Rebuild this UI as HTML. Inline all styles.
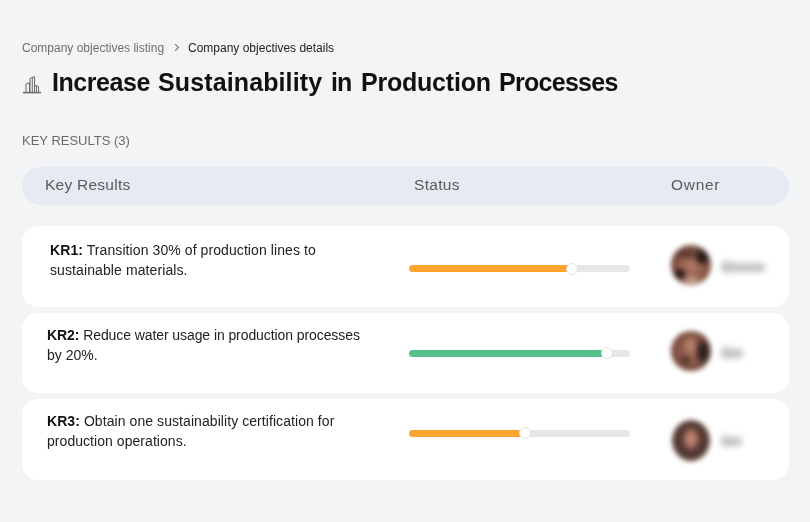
<!DOCTYPE html>
<html><head><meta charset="utf-8">
<style>
html,body{margin:0;padding:0;}
body{width:810px;height:522px;background:#f3f4f6;position:relative;overflow:hidden;font-family:"Liberation Sans",sans-serif;}
.a{position:absolute;white-space:nowrap;line-height:1;will-change:transform;}
.bc1{left:22px;top:41.5px;font-size:12px;color:#6e6e6e;}
.chev{left:172px;top:41px;width:8px;height:12px;}
.bc2{left:188px;top:41.5px;font-size:12px;color:#222;}
.title{top:69.5px;font-size:25px;font-weight:bold;color:#111;}
.icon{left:22px;top:75px;width:20px;height:20px;}
.kr{left:22px;top:134px;font-size:13px;color:#6a6a6a;}
.thead{left:22px;top:167px;width:767px;height:38px;border-radius:19px;background:#e6eaf2;}
.th{top:177px;font-size:15.5px;color:#5a5a5a;}
.card{will-change:auto;left:22px;width:767px;height:80px;border-radius:16px;background:#fff;}
.txt{font-size:14px;color:#222;line-height:20px;white-space:nowrap;}
.txt b{font-weight:bold;color:#111;}
.track{left:409px;width:221px;height:7px;border-radius:4px;background:#e7e7e7;}
.fill{position:absolute;left:0;top:0;height:100%;border-radius:4px 0 0 4px;}
.knob{width:10px;height:10px;border-radius:50%;background:#fff;border:1px solid #e2e2e2;}
.av{width:40px;height:40px;border-radius:50%;filter:blur(2.6px);}
.nm{height:9px;border-radius:4px;background:#c2c2c2;filter:blur(3px);}
</style></head><body>
<div class="a bc1">Company objectives listing</div>
<svg class="a chev" viewBox="0 0 8 12"><path d="M3.1 3.1 L6.4 6.4 L3.1 9.8" fill="none" stroke="#737373" stroke-width="1.1"/></svg>
<div class="a bc2">Company objectives details</div>

<svg class="a" style="left:20px;top:72px;width:24px;height:24px" viewBox="20 72 24 24" fill="none" stroke="#6a6a6a" stroke-width="1">
  <path d="M26 92 V84 L29.5 82.8 V92"/>
  <path d="M30 92 V78.5 L34.5 76.6 V92"/>
  <path d="M32.3 92 V77.6"/>
  <path d="M34.5 85.2 L38.5 86.6 V92"/>
  <path d="M36.4 92 V86"/>
  <path d="M23 92.6 H41" stroke-width="1.6" stroke="#707070"/>
</svg>
<div class="a title" style="left:51.6px;letter-spacing:-0.45px">Increase</div>
<div class="a title" style="left:158.1px;letter-spacing:0.12px">Sustainability</div>
<div class="a title" style="left:331px;letter-spacing:-1px">in</div>
<div class="a title" style="left:360.5px;letter-spacing:-0.22px">Production</div>
<div class="a title" style="left:499.2px;letter-spacing:-0.72px">Processes</div>

<div class="a kr">KEY RESULTS (3)</div>

<div class="a thead"></div>
<div class="a th" style="left:45px;letter-spacing:0.25px">Key Results</div>
<div class="a th" style="left:414px;letter-spacing:0.3px">Status</div>
<div class="a th" style="left:671px;letter-spacing:0.7px">Owner</div>

<div class="a card" style="top:226px;height:81px"></div>
<div class="a card" style="top:313px;height:80px"></div>
<div class="a card" style="top:399px;height:81px"></div>

<div class="a txt" style="left:50px;top:240px"><span style="letter-spacing:0.085px"><b>KR1:</b> Transition 30% of production lines to</span><br><span style="letter-spacing:0.1px">sustainable materials.</span></div>
<div class="a txt" style="left:47px;top:325px"><span style="letter-spacing:-0.083px"><b>KR2:</b> Reduce water usage in production processes</span><br>by 20%.</div>
<div class="a txt" style="left:47px;top:411px"><span style="letter-spacing:0.07px"><b>KR3:</b> Obtain one sustainability certification for</span><br><span style="letter-spacing:0.05px">production operations.</span></div>

<div class="a track" style="top:265px"><div class="fill" style="width:163px;background:#fba530"></div></div>
<div class="a knob" style="left:566px;top:263px"></div>
<div class="a track" style="top:350px;height:6.5px"><div class="fill" style="width:193px;background:#56bf8a"></div></div>
<div class="a knob" style="left:601px;top:347px"></div>
<div class="a track" style="top:430px"><div class="fill" style="width:112px;background:#fba530"></div></div>
<div class="a knob" style="left:519px;top:427px"></div>

<div class="a av" style="left:671px;top:245px;background:
radial-gradient(ellipse 22% 24% at 78% 30%,#231a18 0,#2a1f1c 45%,rgba(42,31,28,0) 100%),
radial-gradient(ellipse 18% 16% at 22% 72%,#221918 0,#261c1a 45%,rgba(38,28,26,0) 100%),
radial-gradient(ellipse 40% 14% at 40% 24%,#4a3028 0,rgba(74,48,40,0) 100%),
radial-gradient(ellipse 30% 16% at 52% 90%,#dcb3a5 0,rgba(220,179,165,0) 100%),
radial-gradient(circle at 52% 52%,#b57a68 0,#9c6452 32%,#7a4c3e 62%,#5a3a31 100%)"></div>
<div class="a nm" style="left:722px;top:263px;width:43px"></div>
<div class="a nm" style="left:722px;top:260px;width:8px;height:12px;opacity:.6"></div>
<div class="a av" style="left:671px;top:331px;background:
radial-gradient(ellipse 20% 36% at 80% 52%,#2a201e 0,#2e2220 45%,rgba(46,34,32,0) 100%),
radial-gradient(ellipse 20% 28% at 48% 35%,#c58a78 0,rgba(197,138,120,0) 100%),
radial-gradient(ellipse 16% 14% at 36% 72%,#3c2823 0,rgba(60,40,35,0) 100%),
radial-gradient(circle at 50% 50%,#9c6755 0,#815242 55%,#5e3d33 100%)"></div>
<div class="a nm" style="left:722px;top:349px;width:21px"></div>
<div class="a nm" style="left:722px;top:346px;width:7px;height:12px;opacity:.6"></div>
<div class="a av" style="left:672px;top:420px;width:38px;height:41px;background:
radial-gradient(ellipse 26% 32% at 50% 46%,#cc907e 0,#b67967 45%,rgba(110,70,60,0) 100%),
radial-gradient(ellipse 50% 50% at 50% 50%,#6e463b 0,#4b3430 62%,#65473e 100%)"></div>
<div class="a nm" style="left:722px;top:437px;width:20px"></div>
<div class="a nm" style="left:722px;top:434px;width:5px;height:12px;opacity:.6"></div>
</body></html>
